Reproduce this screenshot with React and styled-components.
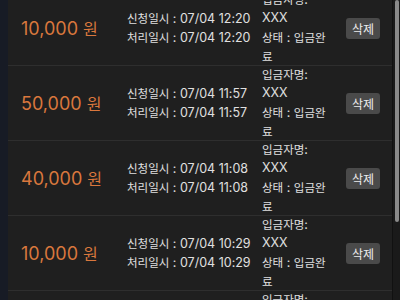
import React from "react";
import styled, { createGlobalStyle } from "styled-components";

const Global = createGlobalStyle`
  html, body { margin: 0; padding: 0; background: #1f1f1f; overflow: hidden; }
  body { font-family: Inter, "Noto Sans CJK KR", sans-serif; }
`;

const Page = styled.div`
  display: flex;
  width: 400px;
  height: 300px;
  overflow: hidden;
  background: #1f1f1f;
`;

const SideStrip = styled.div`
  width: 8px;
  flex: none;
  background: #171b25;
`;

const List = styled.div`
  flex: 1;
  display: flex;
  flex-direction: column;
  margin-top: -9px;
`;

const Row = styled.div`
  display: flex;
  align-items: center;
  height: 75px;
  flex: none;
  box-sizing: border-box;
  border-bottom: 1px solid #2e2e2e;
  padding-left: 13px;
  color: #e0e0e0;
`;

const Amount = styled.div`
  width: 106px;
  flex: none;
  color: #d9773d;
  font-family: Inter, "Noto Sans CJK KR", sans-serif;
  font-size: 18px;
  line-height: 22px;
`;

const Won = styled.span`
  font-family: "Noto Sans CJK KR", sans-serif;
  font-size: 16px;
  margin-left: 5px;
`;

const Dates = styled.div`
  width: 135px;
  flex: none;
  font-size: 12.5px;
  line-height: 19px;
  white-space: nowrap;
`;

const Label = styled.span`
  font-family: "Noto Sans CJK KR", sans-serif;
  font-size: 11.5px;
`;

const Info = styled.div`
  width: 70px;
  flex: none;
  font-size: 12.5px;
  line-height: 18.5px;
`;

const InfoLine = styled.div``;

const DeleteButton = styled.button`
  margin-left: 14px;
  width: 34px;
  height: 21px;
  padding: 0;
  border: none;
  border-radius: 3px;
  background: #4a4a4a;
  color: #ececec;
  font-family: "Noto Sans CJK KR", sans-serif;
  font-size: 12px;
  line-height: 21px;
`;

const Scrollbar = styled.div`
  width: 8px;
  flex: none;
  display: flex;
  flex-direction: column;
  background: #1a1a1a;
  border-left: 1px solid #111;
  box-sizing: border-box;
  padding: 0 1px 0 2px;
`;

const Thumb = styled.div`
  height: 222px;
  border-radius: 2px;
  background: #8a8a8a;
`;

const rows = [
  { amount: "10,000", time: "12:20" },
  { amount: "50,000", time: "11:57" },
  { amount: "40,000", time: "11:08" },
  { amount: "10,000", time: "10:29" },
  { amount: "10,000", time: "10:12" },
];

export default function App() {
  return (
    <>
      <Global />
      <Page>
        <SideStrip />
        <List>
          {rows.map((r, i) => (
            <Row key={i}>
              <Amount>
                {r.amount}
                <Won>원</Won>
              </Amount>
              <Dates>
                <div>
                  <Label>신청일시</Label> : 07/04 {r.time}
                </div>
                <div>
                  <Label>처리일시</Label> : 07/04 {r.time}
                </div>
              </Dates>
              <Info>
                <InfoLine>
                  <Label>입금자명</Label>:
                </InfoLine>
                <InfoLine>XXX</InfoLine>
                <InfoLine>
                  <Label>상태</Label> : <Label>입금완료</Label>
                </InfoLine>
              </Info>
              <DeleteButton>삭제</DeleteButton>
            </Row>
          ))}
        </List>
        <Scrollbar>
          <Thumb />
        </Scrollbar>
      </Page>
    </>
  );
}
